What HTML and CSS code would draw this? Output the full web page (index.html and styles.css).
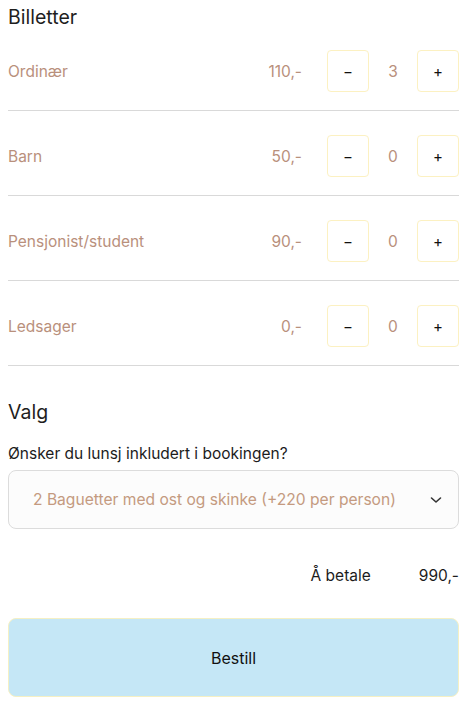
FILE: index.html
```html
<!DOCTYPE html>
<html lang="no">
<head>
<meta charset="utf-8">
<link rel="stylesheet" href="styles.css">
</head>
<body>
<div class="page">
  <h2 class="heading">Billetter</h2>
  <div class="tickets">
    <div class="row">
      <span class="label">Ordinær</span>
      <span class="price">110,-</span>
      <button class="step">−</button>
      <span class="count">3</span>
      <button class="step">+</button>
    </div>
    <div class="row">
      <span class="label">Barn</span>
      <span class="price">50,-</span>
      <button class="step">−</button>
      <span class="count">0</span>
      <button class="step">+</button>
    </div>
    <div class="row">
      <span class="label">Pensjonist/student</span>
      <span class="price">90,-</span>
      <button class="step">−</button>
      <span class="count">0</span>
      <button class="step">+</button>
    </div>
    <div class="row">
      <span class="label">Ledsager</span>
      <span class="price">0,-</span>
      <button class="step">−</button>
      <span class="count">0</span>
      <button class="step">+</button>
    </div>
  </div>
  <h2 class="heading valg">Valg</h2>
  <p class="question">Ønsker du lunsj inkludert i bookingen?</p>
  <div class="select">
    <span class="select-text">2 Baguetter med ost og skinke (+220 per person)</span>
    <svg class="chev" width="12" height="8" viewBox="0 0 12 8"><path d="M1.5 2 L6 6 L10.5 2" fill="none" stroke="#333" stroke-width="1.6" stroke-linecap="round" stroke-linejoin="round"/></svg>
  </div>
  <div class="total">
    <span>Å betale</span>
    <span class="total-sum">990,-</span>
  </div>
  <button class="order">Bestill</button>
</div>
</body>
</html>
```
FILE: styles.css
```css
* { box-sizing: border-box; }
body {
  margin: 0;
  padding: 8px;
  font-family: "Inter", "Open Sans", sans-serif;
  background: #fff;
  color: #1c1c1c;
}
.page {
  width: 451px;
}
.heading {
  margin: 0;
  font-size: 19.5px;
  font-weight: 400;
  line-height: 18px;
  color: #1e1e1e;
}
.tickets {
  margin-top: 24px;
}
.row {
  display: flex;
  align-items: center;
  padding: 0 0 18px;
  margin-bottom: 24px;
  border-bottom: 1px solid #d9d9d9;
}
.row:last-child { margin-bottom: 0; }
.label {
  flex: 1;
  font-size: 15.5px;
  color: #b9907c;
}
.price {
  font-size: 15.5px;
  color: #b9907c;
  margin-right: 25px;
}
.step {
  width: 42px;
  height: 42px;
  border: 1px solid #fcf1c2;
  border-radius: 4px;
  background: #fff;
  font-family: inherit;
  font-size: 15px;
  color: #111;
  padding: 0;
}
.count {
  width: 48px;
  text-align: center;
  font-size: 15.5px;
  color: #b9907c;
}
.valg {
  margin-top: 37px;
}
.question {
  margin: 24px 0 0;
  font-size: 15.5px;
  color: #1c1c1c;
  line-height: 18px;
}
.select {
  margin-top: 7px;
  height: 59px;
  border: 1px solid #dcdcdc;
  border-radius: 8px;
  background: #fcfcfc;
  display: flex;
  align-items: center;
  padding: 0 16px 0 24px;
}
.select-text {
  flex: 1;
  font-size: 15.6px;
  color: #c49a80;
}
.total {
  display: flex;
  justify-content: flex-end;
  gap: 48px;
  margin-top: 38px;
  font-size: 15.5px;
  line-height: 18px;
}
.order {
  display: block;
  margin-top: 33px;
  width: 100%;
  height: 79px;
  border: 1px solid #f5f0c4;
  border-radius: 8px;
  background: #c5e7f6;
  font-family: inherit;
  font-size: 16px;
  color: #111;
}
```
